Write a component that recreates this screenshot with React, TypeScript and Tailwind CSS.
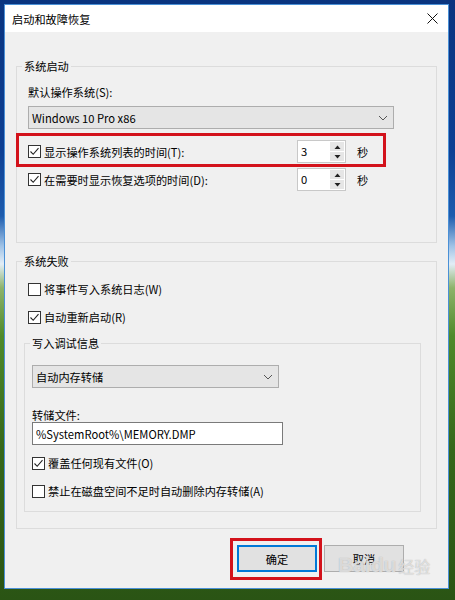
import React from "react";

function CheckBox({ checked }: { checked?: boolean }) {
  return (
    <div className="flex h-[13px] w-[13px] shrink-0 items-center justify-center border border-[#333333] bg-white">
      {checked && (
        <svg width="11" height="11" viewBox="0 0 11 11">
          <path d="M1.5 5.5 L4.2 8.3 L9.5 2.2" fill="none" stroke="#222" strokeWidth="1.1" />
        </svg>
      )}
    </div>
  );
}

function CheckRow({ checked, label }: { checked?: boolean; label: string }) {
  return (
    <div className="flex h-[14px] items-center gap-[3px]">
      <CheckBox checked={checked} />
      <span className="whitespace-nowrap">{label}</span>
    </div>
  );
}

function Chevron() {
  return (
    <svg width="10" height="6" viewBox="0 0 10 6">
      <path d="M1 1 L5 5 L9 1" fill="none" stroke="#555" strokeWidth="1" />
    </svg>
  );
}

function Combo({ text, width }: { text: string; width: string }) {
  return (
    <div className={`flex h-[23px] items-center justify-between border border-[#adadad] bg-[#e5e5e5] pl-[3px] pr-[5px] ${width}`}>
      <span className="whitespace-nowrap">{text}</span>
      <Chevron />
    </div>
  );
}

function Spin({ value }: { value: string }) {
  return (
    <div className="flex h-[23px] w-[49px] shrink-0 border border-[#c8c8c8] bg-white">
      <div className="flex-1 pl-[3px] leading-[21px]">{value}</div>
      <div className="my-[1px] mr-[1px] flex w-[14px] flex-col gap-[1px]">
        <div className="flex flex-1 items-center justify-center bg-[#e6e6e6]">
          <svg width="7" height="4" viewBox="0 0 7 4">
            <path d="M0.5 4 L3.5 0.5 L6.5 4 Z" fill="#222" />
          </svg>
        </div>
        <div className="flex flex-1 items-center justify-center bg-[#e6e6e6]">
          <svg width="7" height="4" viewBox="0 0 7 4">
            <path d="M0.5 0 L3.5 3.5 L6.5 0 Z" fill="#222" />
          </svg>
        </div>
      </div>
    </div>
  );
}

function SpinRow({ checked, label, value }: { checked?: boolean; label: string; value: string }) {
  return (
    <div className="flex h-[23px] items-center">
      <div className="flex w-[269px] items-center gap-[3px]">
        <CheckBox checked={checked} />
        <span className="whitespace-nowrap">{label}</span>
      </div>
      <Spin value={value} />
      <span className="ml-[11px]">秒</span>
    </div>
  );
}

export default function App() {
  return (
    <div className="relative h-[600px] w-[455px] overflow-hidden bg-[linear-gradient(180deg,#0a347f_0%,#0d3f93_25%,#1d5cae_36%,#9fc2e6_41%,#e2edf6_44%,#8db36a_48%,#4f8a2a_56%,#35671a_75%,#2a5414_100%)] pl-[4px] pt-[4px] font-['Noto_Sans_CJK_SC','Microsoft_YaHei',sans-serif] text-[11.2px] leading-[14px] text-black">
      {/* window */}
      <div className="flex h-[585px] w-[445px] flex-col border border-[#4a90d6] bg-[#f0f0f0]">
        {/* title bar */}
        <div className="flex h-[27px] items-center justify-between bg-white pl-[7px] pr-[10px]">
          <span>启动和故障恢复</span>
          <svg width="11" height="11" viewBox="0 0 11 11">
            <path d="M0.5 0.5 L10.5 10.5 M10.5 0.5 L0.5 10.5" stroke="#111" strokeWidth="1" />
          </svg>
        </div>

        <div className="flex flex-1 flex-col px-[11px] pt-[27px]">
          {/* 系统启动 */}
          <fieldset className="border border-[#dcdcdc] pb-[51px] pl-[5px]">
            <legend className="px-[2px]">系统启动</legend>
            <div className="pl-[6px]">
              <div className="mt-[12px]">默认操作系统(S):</div>
              <div className="mt-[7px]">
                <Combo text="Windows 10 Pro x86" width="w-[366px]" />
              </div>
              <div className="mt-[11px]">
                <SpinRow checked label="显示操作系统列表的时间(T):" value="3" />
              </div>
              <div className="mt-[5px]">
                <SpinRow checked label="在需要时显示恢复选项的时间(D):" value="0" />
              </div>
            </div>
          </fieldset>

          {/* 系统失败 */}
          <fieldset className="mt-[11px] border border-[#dcdcdc] pb-[16px] pl-[5px]">
            <legend className="px-[2px]">系统失败</legend>
            <div className="pl-[6px]">
              <div className="mt-[14px]">
                <CheckRow label="将事件写入系统日志(W)" />
              </div>
              <div className="mt-[14px]">
                <CheckRow checked label="自动重新启动(R)" />
              </div>
            </div>

            <fieldset className="ml-[2px] mt-[12px] w-[397px] border border-[#dcdcdc] pb-[13px] pl-[5px]">
              <legend className="px-[2px]">写入调试信息</legend>
              <div className="pl-[2px]">
                <div className="mt-[15px]">
                  <Combo text="自动内存转储" width="w-[247px]" />
                </div>
                <div className="mt-[20px]">转储文件:</div>
                <div className="flex h-[23px] w-[251px] items-center border border-[#7a7a7a] bg-white pl-[3px]">
                  %SystemRoot%\MEMORY.DMP
                </div>
                <div className="mt-[11px]">
                  <CheckRow checked label="覆盖任何现有文件(O)" />
                </div>
                <div className="mt-[14px]">
                  <CheckRow label="禁止在磁盘空间不足时自动删除内存转储(A)" />
                </div>
              </div>
            </fieldset>
          </fieldset>

          {/* buttons */}
          <div className="mt-[16px] flex justify-end gap-[7px] pr-[33px]">
            <button className="flex h-[27px] w-[80px] items-center justify-center border-2 border-[#0078d7] bg-[#e1e1e1]">
              确定
            </button>
            <button className="flex h-[27px] w-[80px] items-center justify-center border border-[#adadad] bg-[#e1e1e1]">
              取消
            </button>
          </div>
        </div>
      </div>

      {/* annotation frames */}
      <div className="pointer-events-none absolute left-[16px] top-[133px] h-[34px] w-[370px] border-[3px] border-[#d3121b]" />
      <div className="pointer-events-none absolute left-[230px] top-[538px] h-[42px] w-[92px] border-[3px] border-[#d3121b]" />

      {/* watermark */}
      <div className="pointer-events-none absolute left-[338px] top-[553px] flex items-end gap-[2px] text-white/60 [text-shadow:0_0_1px_#a0a0a0]">
        <span className="font-['Liberation_Sans',sans-serif] text-[21px] font-bold leading-[24px]">Baidu</span>
        <span className="text-[16px] leading-[22px]">经验</span>
      </div>
    </div>
  );
}
